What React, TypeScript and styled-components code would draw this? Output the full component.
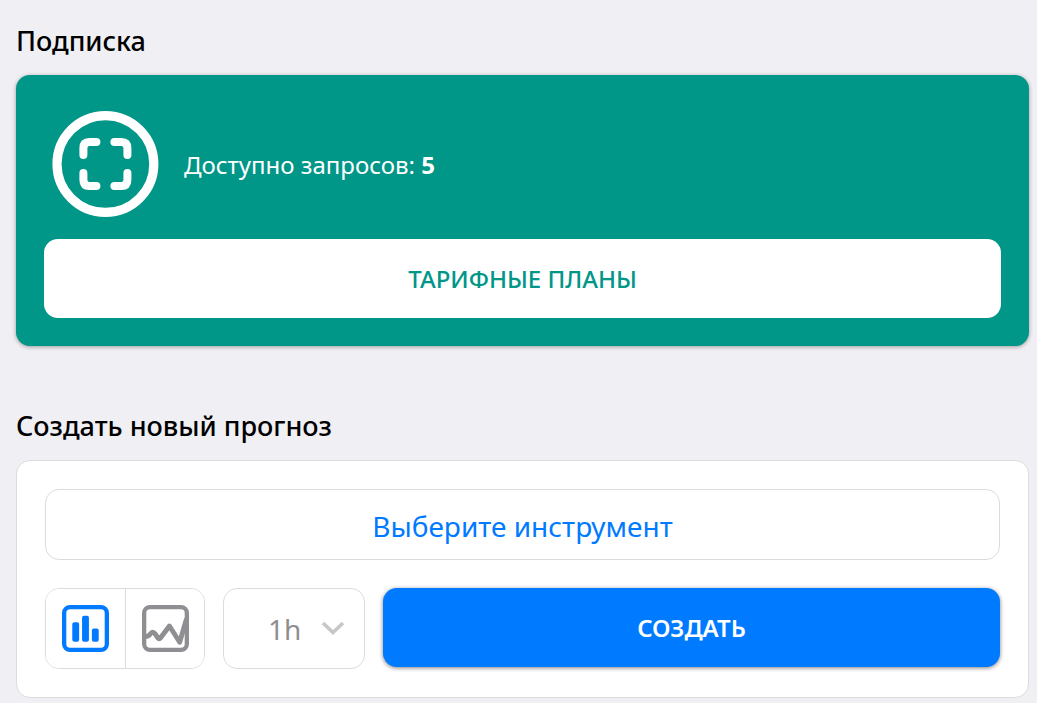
import React, { useState } from "react";
import styled, { createGlobalStyle } from "styled-components";

const GlobalStyle = createGlobalStyle`
  *, *::before, *::after { box-sizing: border-box; }
  body {
    margin: 0;
    background: #efeff4;
    color: #000;
    font-family: "Segoe UI", "Noto Sans", "Open Sans", sans-serif;
  }
  button, select { font-family: inherit; margin: 0; cursor: pointer; }
`;

const Page = styled.main`
  padding: 21px 8px 5px 16px;
`;

const Section = styled.section`
  & + & { margin-top: 60px; }
`;

const Title = styled.h2`
  margin: 0 0 14px;
  font-size: 27px;
  line-height: 40px;
  font-weight: 500;
`;

const SubscriptionCard = styled.div`
  padding: 28px;
  border-radius: 14px;
  background: #009688;
  box-shadow: 0 1px 4px rgba(0, 0, 0, 0.35);
`;

const Quota = styled.div`
  display: flex;
  align-items: center;
  gap: 25px;
  padding: 7px 7px 21px;
  color: #fff;
  font-size: 24px;
  line-height: 32px;

  svg { flex: none; }
  p { margin: 0; padding-top: 2px; }
`;

const FilledButton = styled.button<{ $tone: "white" | "blue" }>`
  display: block;
  width: 100%;
  height: 79px;
  padding: 0 16px;
  border: 0;
  border-radius: 14px;
  font-size: 24px;
  line-height: 32px;
  font-weight: ${(p) => (p.$tone === "blue" ? 600 : 500)};
  color: ${(p) => (p.$tone === "blue" ? "#fff" : "#009688")};
  background: ${(p) => (p.$tone === "blue" ? "#007aff" : "#fff")};
  box-shadow: ${(p) => (p.$tone === "blue" ? "0 1px 4px rgba(0, 0, 0, 0.5)" : "none")};
`;

const FormCard = styled.form`
  display: flex;
  flex-direction: column;
  gap: 28px;
  padding: 28px;
  border: 1px solid #dcdcde;
  border-radius: 14px;
  background: #fff;
`;

const InstrumentButton = styled.button`
  height: 71px;
  padding: 2px 16px 0;
  border: 1px solid #dcdcde;
  border-radius: 14px;
  background: #fff;
  color: #007aff;
  font-size: 28px;
  line-height: 40px;
`;

const Controls = styled.div`
  display: flex;
  align-items: flex-start;
  gap: 18px;
`;

const Segments = styled.div`
  display: flex;
  flex: none;
  height: 81px;
  border: 1px solid #dcdcde;
  border-radius: 14px;
  overflow: hidden;
`;

const Segment = styled.button<{ $active: boolean }>`
  display: flex;
  align-items: center;
  justify-content: center;
  width: 79px;
  padding: 0;
  border: 0;
  background: #fff;
  color: ${(p) => (p.$active ? "#007aff" : "#8e8e93")};

  & + & { border-left: 1px solid #dcdcde; }
`;

const SelectBox = styled.label`
  display: grid;
  flex: none;
  width: 142px;
  height: 81px;
  align-items: center;

  & > * { grid-area: 1 / 1; }
  svg { justify-self: end; margin-right: 20px; pointer-events: none; }
`;

const Select = styled.select`
  appearance: none;
  width: 100%;
  height: 100%;
  padding: 0 44px;
  border: 1px solid #dcdcde;
  border-radius: 14px;
  background: #fff;
  color: #8e8e8e;
  font-size: 28px;
  line-height: 40px;
`;

const FocusIcon = () => (
  <svg width="108" height="108" viewBox="0 0 108 108" fill="none" stroke="#fff" aria-hidden="true">
    <circle cx="54.4" cy="54" r="48.4" strokeWidth="9.2" />
    <path
      d="M32.400 45v-7q0-6 6-6h7M63.400 32h7q6 0 6 6v7M76.400 63v7q0 6-6 6h-7M45.400 76h-7q-6 0-6-6v-7"
      strokeWidth="8"
      strokeLinecap="round"
    />
  </svg>
);

const BarsIcon = () => (
  <svg width="47" height="47" viewBox="0 0 48 48" fill="none" stroke="currentColor" aria-hidden="true">
    <rect x="2.2" y="2.2" width="43.6" height="43.6" rx="6" strokeWidth="4.4" />
    <g fill="currentColor" stroke="none">
      <rect x="10.5" y="17.5" width="7" height="20" rx="2" />
      <rect x="20.5" y="11" width="7" height="26.5" rx="2" />
      <rect x="30.5" y="24" width="7" height="13.5" rx="2" />
    </g>
  </svg>
);

const LineIcon = () => (
  <svg width="47" height="47" viewBox="0 0 48 48" fill="none" stroke="currentColor" aria-hidden="true">
    <rect x="2.2" y="2.2" width="43.6" height="43.6" rx="6" strokeWidth="4.4" />
    <path
      d="M3 32q4 0 5.500-2.500 2.500-3.200 5 0l2.500 4q1.500 2 3 0L28 21.500l10.500 16.500L45.500 14"
      strokeWidth="5"
      strokeLinejoin="round"
    />
  </svg>
);

const Chevron = () => (
  <svg width="24" height="18" viewBox="0 0 24 18" fill="none" stroke="#c7c7c7" strokeWidth="3.6" aria-hidden="true">
    <path d="M2 3l10 9.500L22 3" />
  </svg>
);

export default function App() {
  const [chart, setChart] = useState<"bars" | "line">("bars");

  return (
    <>
      <GlobalStyle />
      <Page>
        <Section>
          <Title>Подписка</Title>
          <SubscriptionCard>
            <Quota>
              <FocusIcon />
              <p>
                Доступно запросов: <b>5</b>
              </p>
            </Quota>
            <FilledButton type="button" $tone="white">
              ТАРИФНЫЕ ПЛАНЫ
            </FilledButton>
          </SubscriptionCard>
        </Section>
        <Section>
          <Title>Создать новый прогноз</Title>
          <FormCard onSubmit={(e) => e.preventDefault()}>
            <InstrumentButton type="button">Выберите инструмент</InstrumentButton>
            <Controls>
              <Segments>
                <Segment
                  type="button"
                  aria-label="Столбцы"
                  aria-pressed={chart === "bars"}
                  $active={chart === "bars"}
                  onClick={() => setChart("bars")}
                >
                  <BarsIcon />
                </Segment>
                <Segment
                  type="button"
                  aria-label="Линия"
                  aria-pressed={chart === "line"}
                  $active={chart === "line"}
                  onClick={() => setChart("line")}
                >
                  <LineIcon />
                </Segment>
              </Segments>
              <SelectBox>
                <Select aria-label="Таймфрейм" defaultValue="1h">
                  <option value="1h">1h</option>
                </Select>
                <Chevron />
              </SelectBox>
              <FilledButton type="submit" $tone="blue">
                СОЗДАТЬ
              </FilledButton>
            </Controls>
          </FormCard>
        </Section>
      </Page>
    </>
  );
}
